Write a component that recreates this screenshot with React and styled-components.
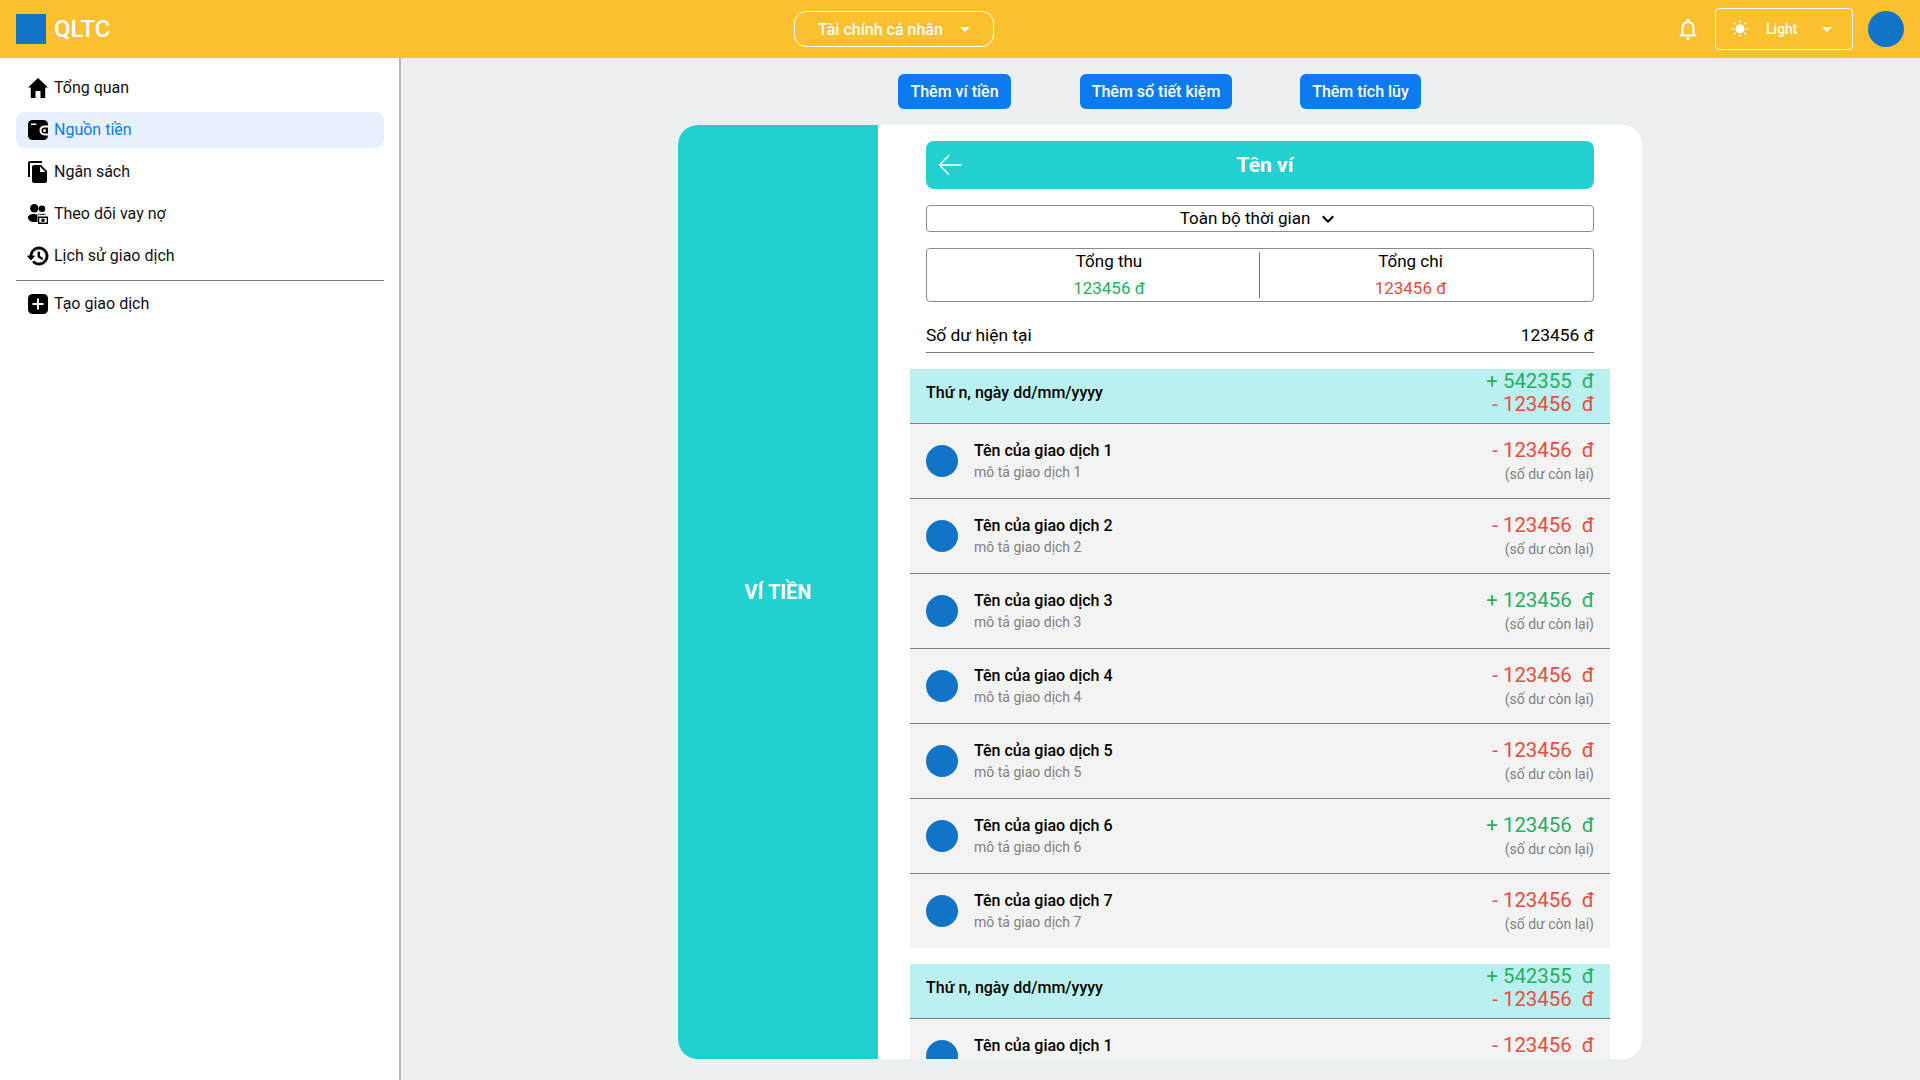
import React from "react";
import styled, { createGlobalStyle } from "styled-components";
import { MdFileCopy, MdOutlineNotifications, MdArrowDropDown, MdKeyboardArrowDown, MdWbSunny } from "react-icons/md";

const GlobalStyle = createGlobalStyle`
  * { box-sizing: border-box; }
  html, body { margin: 0; height: 100%; }
  body { font-family: Roboto, "Noto Sans", sans-serif; background: #ecf0f1; color: #000; overflow: hidden; }
`;

const Page = styled.div`
  width: 1920px;
  height: 1080px;
  display: flex;
  flex-direction: column;
`;

const TopBar = styled.header`
  height: 58px;
  flex: none;
  background: #fbc02d;
  display: grid;
  grid-template-columns: 794px 200px 1fr;
  align-items: center;
  color: #fff;
`;

const Brand = styled.div`
  display: flex;
  align-items: center;
  gap: 8px;
  padding-left: 16px;
  font-size: 24px;
  font-weight: 500;
`;

const LogoSquare = styled.div`
  width: 30px;
  height: 30px;
  background: #1174c6;
`;

const ScopeSelect = styled.div`
  height: 36px;
  border: 1px solid #fff;
  border-radius: 12px;
  display: flex;
  align-items: center;
  justify-content: space-between;
  padding: 0 16px 0 23px;
  font-size: 16px;
  font-weight: 500;
`;

const BarRight = styled.div`
  display: flex;
  align-items: center;
  justify-content: flex-end;
  padding-right: 16px;
`;

const BellWrap = styled.div`
  display: flex;
  margin-right: 14px;
`;

const ThemeSelect = styled.div`
  width: 138px;
  height: 42px;
  border: 1px solid #fff;
  border-radius: 4px;
  display: flex;
  align-items: center;
  padding: 0 13px 0 15px;
  font-size: 14px;
  font-weight: 500;
  margin-right: 15px;

  span { margin-left: 17px; flex: 1; }
`;

const Avatar = styled.div`
  width: ${(p) => p.$size}px;
  height: ${(p) => p.$size}px;
  border-radius: 50%;
  background: #1174c6;
  flex: none;
`;

const Body = styled.div`
  flex: 1;
  display: flex;
  min-height: 0;
`;

const Sidebar = styled.aside`
  width: 401px;
  flex: none;
  background: #fff;
  border-right: 2px solid #b4b8ba;
  padding: 12px 15px 0 16px;
`;

const NavItem = styled.div`
  height: 36px;
  margin-bottom: 6px;
  border-radius: 8px;
  display: flex;
  align-items: center;
  gap: 4px;
  padding-left: 10px;
  font-size: 16px;
  color: ${(p) => (p.$active ? "#0d7bf0" : "#111")};
  background: ${(p) => (p.$active ? "#e7f1fd" : "transparent")};

  svg { color: #000; flex: none; }
`;

const NavLabel = styled.span`
  padding-bottom: 2px;
`;

const NavDivider = styled.div`
  height: 1px;
  background: #7d7d7d;
  margin: 3px 0 5px;
`;

const Main = styled.main`
  flex: 1;
  min-width: 0;
  padding-top: 16px;
  display: flex;
  flex-direction: column;
  align-items: center;
`;

const Actions = styled.div`
  width: 100%;
  height: 35px;
  display: flex;
  padding-left: 497px;
`;

const ActionButton = styled.button`
  height: 35px;
  width: ${(p) => p.$width}px;
  margin-right: ${(p) => p.$gap}px;
  border: none;
  border-radius: 6px;
  background: #0d7bf0;
  color: #fff;
  font-family: inherit;
  font-size: 16px;
  font-weight: 500;
  padding: 0;
`;

const Card = styled.section`
  width: 964px;
  height: 934px;
  margin: 16px 1px 0 0;
  border-radius: 20px;
  background: #fff;
  overflow: hidden;
  display: flex;
`;

const WalletPanel = styled.div`
  width: 200px;
  flex: none;
  background: #22d0d0;
  color: #fff;
  font-size: 20px;
  font-weight: 700;
  display: flex;
  align-items: center;
  justify-content: center;
`;

const Detail = styled.div`
  flex: 1;
  min-width: 0;
  padding: 16px 32px 0;
  overflow: hidden;
`;

const Section = styled.div`
  padding: 0 16px;
`;

const WalletHeader = styled.div`
  height: 48px;
  border-radius: 8px;
  background: #22d0d0;
  color: #fff;
  font-size: 21px;
  font-weight: 700;
  display: flex;
  align-items: center;
  justify-content: center;
  padding-left: 10px;
  position: relative;

  svg { position: absolute; left: 12px; top: 13px; }
`;

const Filter = styled.div`
  height: 27px;
  margin-top: 16px;
  border: 1px solid #8a8a8a;
  border-radius: 4px;
  display: flex;
  align-items: center;
  justify-content: center;
  gap: 6px;
  font-size: 17px;

  span { padding-bottom: 2px; }
`;

const Totals = styled.div`
  height: 54px;
  margin-top: 16px;
  border: 1px solid #8a8a8a;
  border-radius: 4px;
  display: flex;
  align-items: center;
`;

const TotalCell = styled.div`
  height: 46px;
  width: ${(p) => p.$width}px;
  padding: ${(p) => (p.$split ? "0 0 0 32px" : "0 32px 0 0")};
  border-right: ${(p) => (p.$split ? "1px solid #777" : "none")};
  display: flex;
  flex-direction: column;
  align-items: center;
  gap: 7px;
  font-size: 17px;
  line-height: 20px;

  span { position: relative; top: -1px; }
`;

const Money = styled.span`
  color: ${(p) => (p.$plus ? "#27ae60" : "#e74c3c")};
`;

const Balance = styled.div`
  height: 51px;
  border-bottom: 1px solid #7d7d7d;
  display: flex;
  align-items: flex-end;
  justify-content: space-between;
  padding-bottom: 7px;
  font-size: 17.4px;
  line-height: 20px;
`;

const GroupHeader = styled.div`
  height: 55px;
  margin-top: ${(p) => p.$top}px;
  padding: 0 16px;
  background: #bbf0f1;
  border-bottom: 1px solid #7d7d7d;
  display: flex;
  align-items: center;
  justify-content: space-between;
  font-size: 16px;
  font-weight: 500;
`;

const GroupLabel = styled.span`
  padding-bottom: 7px;
`;

const GroupSums = styled.div`
  display: flex;
  flex-direction: column;
  align-items: flex-end;
  font-size: 20.4px;
  font-weight: 400;
  line-height: 23px;
  margin-top: -6px;
`;

const Row = styled.div`
  height: ${(p) => (p.$last ? 74 : 75)}px;
  padding: 0 16px;
  background: #f3f3f3;
  border-bottom: ${(p) => (p.$last ? "none" : "1px solid #7d7d7d")};
  display: flex;
  align-items: center;
  gap: 16px;
`;

const RowText = styled.div`
  flex: 1;
  display: flex;
  flex-direction: column;
  gap: 2px;
`;

const RowName = styled.div`
  font-size: 16px;
  font-weight: 500;
  line-height: 20px;
`;

const RowNote = styled.div`
  font-size: 14px;
  line-height: 18px;
  color: #808080;
`;

const RowAmount = styled.div`
  display: flex;
  flex-direction: column;
  align-items: flex-end;
  gap: 3px;
  font-size: 20.4px;
  line-height: 23px;
`;

const Remain = styled.div`
  font-size: 14px;
  line-height: 18px;
  color: #808080;
`;

const Glyph = ({ children }) => (
  <svg width={24} height={24} viewBox="0 0 24 24" fill="currentColor">
    {children}
  </svg>
);

const HomeIcon = () => (
  <Glyph>
    <path d="M12 2 22 11.500h-2.800V22H14.500v-7h-5v7H4.800V11.500H2z" />
  </Glyph>
);

const WalletIcon = () => (
  <Glyph>
    <rect x="2" y="2" width="20" height="20" rx="4.500" />
    <rect x="5" y="5.600" width="5.500" height="1.500" rx=".5" fill="#fff" />
    <path d="M22 7.400h-3.500a5 5 0 0 0 0 10H22v-2h-3.500a3 3 0 0 1 0-6H22z" fill="#fff" />
    <circle cx="18.500" cy="12.400" r="1.500" fill="#fff" />
  </Glyph>
);

const DebtIcon = () => (
  <Glyph>
    <circle cx="8.300" cy="6.300" r="4.200" />
    <circle cx="16" cy="6.800" r="3.300" />
    <path d="M2 15.500c0-2.300 2.500-3.500 6-3.500 1.200 0 2.500.2 3.500.5V20H8c-3.500 0-6-1.800-6-4.500z" />
    <path d="M12 12.300c1-.4 2.500-.6 4-.6 1.800 0 3.300.3 4.300 1H12z" />
    <path d="M12 14.500h10V22H12zm1.300 1.400v4.700h7.400v-4.700zM17 16.500a1.800 1.800 0 1 1 0 3.600 1.800 1.800 0 0 1 0-3.600z" fillRule="evenodd" />
  </Glyph>
);

const HistoryIcon = () => (
  <Glyph>
    <path
      stroke="currentColor"
      strokeWidth=".9"
      d="M13 3c-4.970 0-9 4.030-9 9H1.500l3.390 3.890.07.14L8.500 12H6c0-3.870 3.130-7 7-7s7 3.130 7 7-3.130 7-7 7c-1.930 0-3.680-.79-4.940-2.060l-1.420 1.420C8.270 19.990 10.510 21 13 21c4.970 0 9-4.030 9-9s-4.030-9-9-9zm-1 5v5l4.280 2.540.72-1.210-3.500-2.080V8H12z"
    />
  </Glyph>
);

const AddIcon = () => (
  <Glyph>
    <rect x="2" y="2" width="20" height="20" rx="4.500" />
    <path d="M11 6.500h2V11h4.500v2H13v4.500h-2V13H6.500v-2H11z" fill="#fff" />
  </Glyph>
);

const BackArrow = () => (
  <svg width="24" height="22" viewBox="0 0 24 22" fill="none" stroke="currentColor" strokeWidth="1.500">
    <path d="M23.500 11H1.500M11 1.200 1.500 11l9.500 9.800" />
  </svg>
);

const navItems = [
  { label: "Tổng quan", icon: <HomeIcon /> },
  { label: "Nguồn tiền", icon: <WalletIcon />, active: true },
  { label: "Ngân sách", icon: <MdFileCopy size={24} /> },
  { label: "Theo dõi vay nợ", icon: <DebtIcon /> },
  { label: "Lịch sử giao dịch", icon: <HistoryIcon /> },
];

const rows = [false, false, true, false, false, true, false];

const TransactionRow = ({ index, plus, last }) => (
  <Row $last={last}>
    <Avatar $size={32} />
    <RowText>
      <RowName>Tên của giao dịch {index}</RowName>
      <RowNote>mô tả giao dịch {index}</RowNote>
    </RowText>
    <RowAmount>
      <Money $plus={plus}>{plus ? "+" : "-"} 123456 &nbsp;đ</Money>
      <Remain>(số dư còn lại)</Remain>
    </RowAmount>
  </Row>
);

const DayHeader = ({ top }) => (
  <GroupHeader $top={top}>
    <GroupLabel>Thứ n, ngày dd/mm/yyyy</GroupLabel>
    <GroupSums>
      <Money $plus>+ 542355 &nbsp;đ</Money>
      <Money>- 123456 &nbsp;đ</Money>
    </GroupSums>
  </GroupHeader>
);

export default function App() {
  return (
    <Page>
      <GlobalStyle />
      <TopBar>
        <Brand>
          <LogoSquare />
          QLTC
        </Brand>
        <ScopeSelect>
          Tài chính cá nhân
          <MdArrowDropDown size={24} />
        </ScopeSelect>
        <BarRight>
          <BellWrap>
            <MdOutlineNotifications size={26} />
          </BellWrap>
          <ThemeSelect>
            <MdWbSunny size={18} />
            <span>Light</span>
            <MdArrowDropDown size={24} />
          </ThemeSelect>
          <Avatar $size={36} />
        </BarRight>
      </TopBar>
      <Body>
        <Sidebar>
          {navItems.map((item) => (
            <NavItem key={item.label} $active={item.active}>
              {item.icon}
              <NavLabel>{item.label}</NavLabel>
            </NavItem>
          ))}
          <NavDivider />
          <NavItem>
            <AddIcon />
            <NavLabel>Tạo giao dịch</NavLabel>
          </NavItem>
        </Sidebar>
        <Main>
          <Actions>
            <ActionButton $width={113} $gap={69}>Thêm ví tiền</ActionButton>
            <ActionButton $width={152} $gap={68}>Thêm sổ tiết kiệm</ActionButton>
            <ActionButton $width={121} $gap={0}>Thêm tích lũy</ActionButton>
          </Actions>
          <Card>
            <WalletPanel>VÍ TIỀN</WalletPanel>
            <Detail>
              <Section>
                <WalletHeader>
                  <BackArrow />
                  Tên ví
                </WalletHeader>
                <Filter>
                  <span>Toàn bộ thời gian</span>
                  <MdKeyboardArrowDown size={24} />
                </Filter>
                <Totals>
                  <TotalCell $width={333} $split>
                    <span>Tổng thu</span>
                    <Money $plus>123456 đ</Money>
                  </TotalCell>
                  <TotalCell $width={333}>
                    <span>Tổng chi</span>
                    <Money>123456 đ</Money>
                  </TotalCell>
                </Totals>
                <Balance>
                  <span>Số dư hiện tại</span>
                  <span>123456 đ</span>
                </Balance>
              </Section>
              <DayHeader top={16} />
              {rows.map((plus, i) => (
                <TransactionRow key={i} index={i + 1} plus={plus} last={i === rows.length - 1} />
              ))}
              <DayHeader top={16} />
              <TransactionRow index={1} plus={false} />
            </Detail>
          </Card>
        </Main>
      </Body>
    </Page>
  );
}
